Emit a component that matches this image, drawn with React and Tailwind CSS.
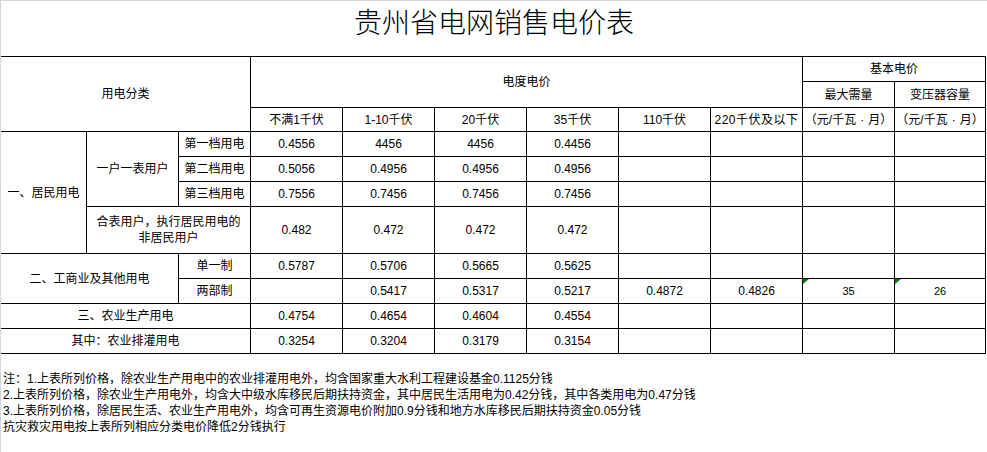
const Cell = ({ children, className = '' }) => (
  <div className={`bg-white flex items-center justify-center text-center ${className}`}>{children}</div>
);

// small green "number stored as text" marker like Excel
const TextNum = ({ value }) => (
  <div className="relative bg-white flex items-center justify-center text-[11px]">
    <svg className="absolute left-0 top-0" width="6" height="5" viewBox="0 0 6 5">
      <polygon points="0,0 6,0 0,5" fill="#0a7a0a" />
    </svg>
    {value}
  </div>
);

const Unit = () => (
  <Cell className="whitespace-nowrap">
    （元/千瓦<span className="px-[4px]">·</span>月）
  </Cell>
);

const Values = ({ values }) => (
  <>
    {values.map((v, i) => (
      <Cell key={i}>{v}</Cell>
    ))}
  </>
);

const blank4 = ['', '', '', ''];

const App = () => {
  return (
    <div className="w-[987px] h-[452px] bg-white border-l border-t border-[#d4d4d4] text-black text-[12px] [font-family:'Liberation_Sans','Noto_Sans_CJK_SC',sans-serif] overflow-hidden">
      {/* Title */}
      <div className="h-[55px] pt-[6px] flex justify-center">
        <h1 className="text-[28px] leading-[28px] font-light [font-family:'Noto_Sans_CJK_SC',sans-serif]">贵州省电网销售电价表</h1>
      </div>

      {/* Price table */}
      <div className="w-[985px] bg-black grid gap-px pt-px pr-px pb-px grid-cols-[85px_91px_71px_repeat(7,91px)_90px] grid-rows-[24px_25px_23px_24px_24px_24px_46px_24px_24px_24px_24px]">
        <Cell className="col-span-3 row-span-3">用电分类</Cell>
        <Cell className="col-span-6 row-span-2">电度电价</Cell>
        <Cell className="col-span-2">基本电价</Cell>
        <Cell>最大需量</Cell>
        <Cell>变压器容量</Cell>

        <Cell>不满1千伏</Cell>
        <Cell>1-10千伏</Cell>
        <Cell>20千伏</Cell>
        <Cell>35千伏</Cell>
        <Cell>110千伏</Cell>
        <Cell className="tracking-[0.5px]">220千伏及以下</Cell>
        <Unit />
        <Unit />

        {/* 居民用电 */}
        <Cell className="row-span-4">一、居民用电</Cell>
        <Cell className="row-span-3">一户一表用户</Cell>
        <Cell>第一档用电</Cell>
        <Values values={['0.4556', '4456', '4456', '0.4456', ...blank4]} />
        <Cell>第二档用电</Cell>
        <Values values={['0.5056', '0.4956', '0.4956', '0.4956', ...blank4]} />
        <Cell>第三档用电</Cell>
        <Values values={['0.7556', '0.7456', '0.7456', '0.7456', ...blank4]} />
        <Cell className="col-span-2 leading-[16px]">
          合表用户，执行居民用电的
          <br />
          非居民用户
        </Cell>
        <Values values={['0.482', '0.472', '0.472', '0.472', ...blank4]} />

        {/* 工商业 */}
        <Cell className="col-span-2 row-span-2">二、工商业及其他用电</Cell>
        <Cell>单一制</Cell>
        <Values values={['0.5787', '0.5706', '0.5665', '0.5625', ...blank4]} />
        <Cell>两部制</Cell>
        <Values values={['', '0.5417', '0.5317', '0.5217', '0.4872', '0.4826']} />
        <TextNum value="35" />
        <TextNum value="26" />

        {/* 农业 */}
        <Cell className="col-span-3">三、农业生产用电</Cell>
        <Values values={['0.4754', '0.4654', '0.4604', '0.4554', ...blank4]} />
        <Cell className="col-span-3">其中：农业排灌用电</Cell>
        <Values values={['0.3254', '0.3204', '0.3179', '0.3154', ...blank4]} />
      </div>

      {/* Notes */}
      <div className="mt-[17px] pl-[2px] leading-[16px]">
        <p>注：1.上表所列价格，除农业生产用电中的农业排灌用电外，均含国家重大水利工程建设基金0.1125分钱</p>
        <p>2.上表所列价格，除农业生产用电外，均含大中级水库移民后期扶持资金，其中居民生活用电为0.42分钱，其中各类用电为0.47分钱</p>
        <p>3.上表所列价格，除居民生活、农业生产用电外，均含可再生资源电价附加0.9分钱和地方水库移民后期扶持资金0.05分钱</p>
        <p>抗灾救灾用电按上表所列相应分类电价降低2分钱执行</p>
      </div>
    </div>
  );
};

export default App;
